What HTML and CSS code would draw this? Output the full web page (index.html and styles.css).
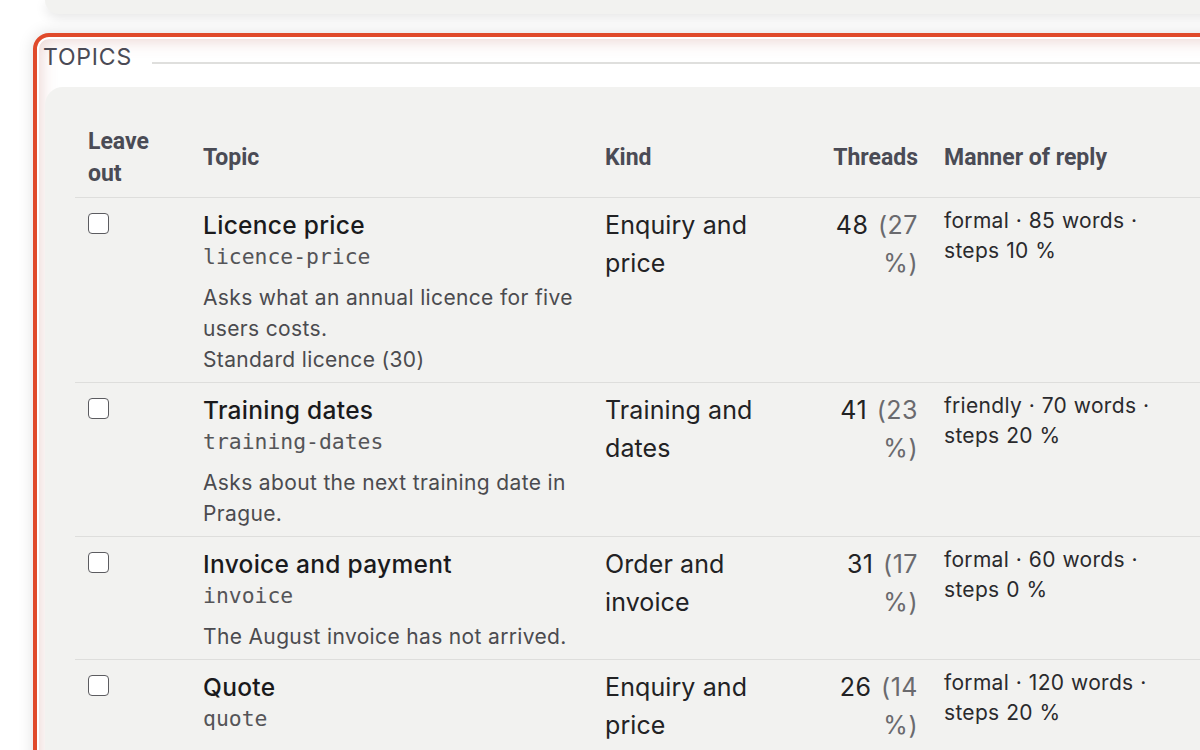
FILE: index.html
```html
<!DOCTYPE html>
<html lang="en">
<head>
<meta charset="utf-8">
<title>Topics</title>
<link rel="stylesheet" href="styles.css">
</head>
<body>
<div class="page">
  <div class="prev-card"></div>
  <section class="topics">
    <div class="topics-head">
      <h2 class="topics-title">TOPICS</h2>
      <span class="topics-rule"></span>
    </div>
    <div class="panel">
      <table class="topic-table">
        <colgroup>
          <col class="c-leave">
          <col class="c-topic">
          <col class="c-kind">
          <col class="c-threads">
          <col class="c-manner">
          <col class="c-rest">
        </colgroup>
        <thead>
          <tr>
            <th>Leave out</th>
            <th>Topic</th>
            <th>Kind</th>
            <th class="num">Threads</th>
            <th>Manner of reply</th>
            <th></th>
          </tr>
        </thead>
        <tbody>
          <tr>
            <td><input type="checkbox" class="check"></td>
            <td>
              <div class="t-name">Licence price</div>
              <div class="t-slug">licence-price</div>
              <div class="t-desc">Asks what an annual licence for five users costs.<br>Standard licence (30)</div>
            </td>
            <td class="kind">Enquiry and price</td>
            <td class="num threads">48 <span class="pct">(27 %)</span></td>
            <td class="manner">formal · 85 words · steps 10 %</td>
            <td></td>
          </tr>
          <tr>
            <td><input type="checkbox" class="check"></td>
            <td>
              <div class="t-name">Training dates</div>
              <div class="t-slug">training-dates</div>
              <div class="t-desc">Asks about the next training date in Prague.</div>
            </td>
            <td class="kind">Training and dates</td>
            <td class="num threads">41 <span class="pct">(23 %)</span></td>
            <td class="manner">friendly · 70 words · steps 20 %</td>
            <td></td>
          </tr>
          <tr>
            <td><input type="checkbox" class="check"></td>
            <td>
              <div class="t-name">Invoice and payment</div>
              <div class="t-slug">invoice</div>
              <div class="t-desc">The August invoice has not arrived.</div>
            </td>
            <td class="kind">Order and invoice</td>
            <td class="num threads">31 <span class="pct">(17 %)</span></td>
            <td class="manner">formal · 60 words · steps 0 %</td>
            <td></td>
          </tr>
          <tr>
            <td><input type="checkbox" class="check"></td>
            <td>
              <div class="t-name">Quote</div>
              <div class="t-slug">quote</div>
            </td>
            <td class="kind">Enquiry and price</td>
            <td class="num threads">26 <span class="pct">(14 %)</span></td>
            <td class="manner">formal · 120 words · steps 20 %</td>
            <td></td>
          </tr>
        </tbody>
      </table>
    </div>
  </section>
</div>
</body>
</html>
```

FILE: styles.css
```css
html, body {
  margin: 0;
  padding: 0;
  background: #ffffff;
  overflow: hidden;
}

body {
  font-family: Inter, "Noto Sans", sans-serif;
  color: #1c1c1e;
}

.page {
  width: 1600px;
}

.prev-card {
  margin-left: 45px;
  height: 14px;
  background: #f2f2f0;
  border-radius: 0 0 18px 18px;
  box-shadow: 0 4px 12px rgba(0, 0, 0, 0.1);
}

.topics {
  margin: 19px 0 0 33px;
  border: 4px solid #e04a2b;
  border-radius: 16px 16px 0 0;
  padding: 6px 0 0 6px;
  background: #ffffff;
  box-shadow:
    inset 0 0 0 2px #ffffff,
    inset 0 0 16px 4px rgba(190, 115, 105, 0.3),
    0 0 16px rgba(0, 0, 0, 0.13);
}

.topics-head {
  display: flex;
  align-items: center;
}

.topics-title {
  margin: 0;
  font-family: Inter, "Noto Sans", sans-serif;
  font-weight: 400;
  font-size: 23px;
  line-height: 28px;
  letter-spacing: 0.8px;
  color: #4a4a55;
  padding-right: 20px;
}

.topics-rule {
  flex: 1;
  height: 0;
  border-top: 2px solid #dfdfdd;
  margin-top: 12px;
}

.panel {
  margin: 16px 0 0 2px;
  background: #f2f2f0;
  border-radius: 18px 0 0 0;
  padding: 31px 0 40px 30px;
}

.topic-table {
  border-collapse: collapse;
  table-layout: fixed;
  width: 1400px;
}

.c-leave { width: 115px; }
.c-topic { width: 402px; }
.c-kind { width: 228px; }
.c-threads { width: 111px; }
.c-manner { width: 256px; }
.c-rest { width: 288px; }

.topic-table th,
.topic-table td {
  padding: 8px 13px 7px;
  text-align: left;
}

.topic-table th {
  font-family: Roboto, "Liberation Sans", sans-serif;
  font-weight: 700;
  font-size: 23px;
  line-height: 32px;
  color: #4a4b55;
  vertical-align: middle;
  border-bottom: 1px solid #dededc;
}

.topic-table td {
  vertical-align: top;
  border-bottom: 1px solid #dededc;
}

.topic-table .num {
  text-align: right;
}

.check {
  appearance: none;
  -webkit-appearance: none;
  display: block;
  width: 21px;
  height: 21px;
  margin: 7px 0 0 0;
  border: 1.5px solid #5c5c60;
  border-radius: 4px;
  background: #ffffff;
  box-sizing: border-box;
}

.t-name {
  font-size: 24.5px;
  font-weight: 500;
  line-height: 38px;
  letter-spacing: 0.3px;
  color: #1a1a1c;
}

.t-slug {
  font-family: "DejaVu Sans Mono", "Liberation Mono", monospace;
  font-size: 21.4px;
  line-height: 26px;
  color: #555558;
}

.t-desc {
  margin-top: 12px;
  font-size: 21px;
  line-height: 31px;
  letter-spacing: 0.35px;
  color: #4b4b4f;
}

.kind {
  font-size: 25px;
  line-height: 38px;
  letter-spacing: 0.1px;
  color: #222224;
}

.threads {
  font-size: 25px;
  line-height: 38px;
  letter-spacing: 0.5px;
  word-spacing: 2px;
  color: #222224;
}

.pct {
  color: #6a6a6e;
}

.manner {
  font-size: 21px;
  line-height: 30px;
  letter-spacing: 0.3px;
  word-spacing: 0.5px;
  color: #2a2a2d;
}
```
